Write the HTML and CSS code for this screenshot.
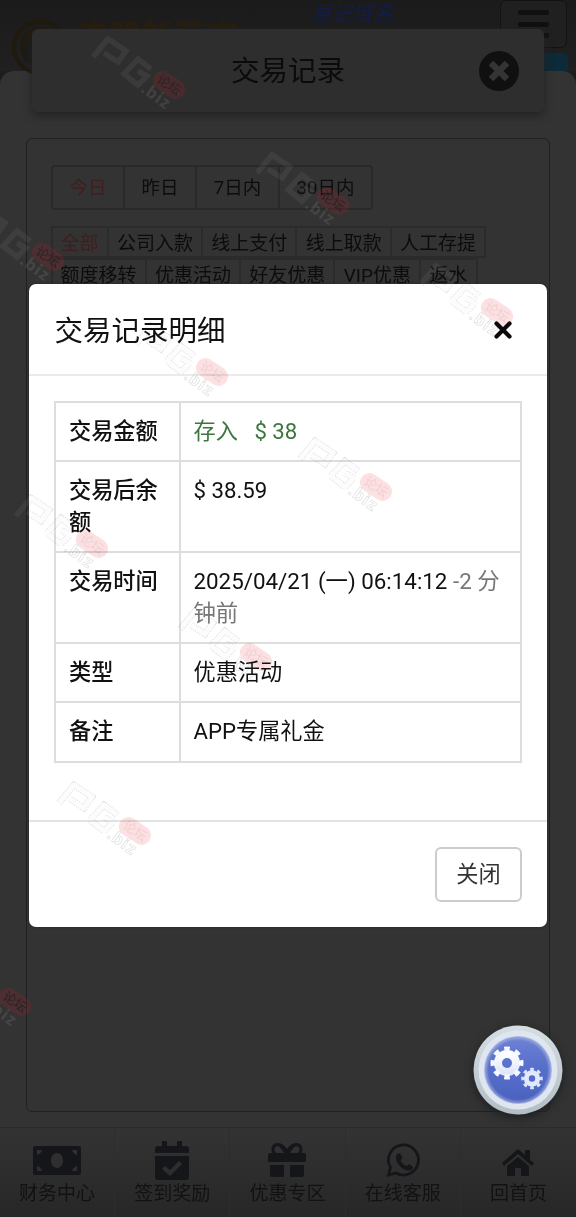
FILE: index.html
```html
<!DOCTYPE html>
<html lang="zh-CN">
<head>
<meta charset="utf-8">
<title>交易记录</title>
<link rel="stylesheet" href="styles.css">
</head>
<body>
<div class="page">
  <header class="top">
    <svg class="emblem" viewBox="0 0 60 60"><circle cx="30" cy="30" r="26" fill="none" stroke="#20190e" stroke-width="4"/><circle cx="30" cy="30" r="20" fill="#211a0f"/><path d="M15 45C12 34 17 24 25 16C22 28 26 32 28 36C34 29 33 21 36 15C47 27 46 38 42 47" fill="#1b1b1b"/></svg>
    <div class="brand">澳門新葡京</div>
    <div class="domain">易记域名</div>
    <div class="burger"><i></i><i></i><i></i></div>
    <div class="tag"></div>
  </header>
  <main class="content">
    <section class="panel">
      <div class="days"><span class="on">今日</span><span>昨日</span><span>7日内</span><span>30日内</span></div>
      <div class="kinds"><span class="on">全部</span><span>公司入款</span><span>线上支付</span><span>线上取款</span><span>人工存提</span></div>
      <div class="kinds"><span>额度移转</span><span>优惠活动</span><span>好友优惠</span><span>VIP优惠</span><span>返水</span></div>
    </section>
  </main>
  <nav class="nav">
    <div class="item"><svg viewBox="0 0 50 40"><path fill-rule="evenodd" d="M3 5H47Q49 5 49 7V32Q49 34 47 34H3Q1 34 1 32V7Q1 5 3 5ZM5 9V14Q9 13 10 9ZM40 9Q41 13 45 14V9ZM5 25V30H10Q9 26 5 25ZM45 25Q41 26 40 30H45ZM25 12C17 12 17 27 25 27S33 12 25 12Z"/></svg><span>财务中心</span></div>
    <div class="item"><svg viewBox="0 0 50 40"><path fill-rule="evenodd" d="M15 0H20V5H30V0H35V5H39Q42 5 42 8V12H8V8Q8 5 11 5H15ZM8 15H42V36Q42 39 39 39H11Q8 39 8 36ZM15 28L23 35L35 23L32 20L23 29L18 25Z"/></svg><span>签到奖励</span></div>
    <div class="item"><svg viewBox="0 0 50 40"><path fill-rule="evenodd" d="M10.500 12C8 7 10 2 16 2Q21 2 25 8Q29 2 34 2C40 2 42 7 39.500 12H42Q44 12 44 14V21H6V14Q6 12 8 12ZM15 12H22Q18 5 15.500 5Q12 6 12.500 9Q13 12 15 12ZM35 12Q37 12 37.500 9Q38 6 34.500 5Q32 5 28 12ZM8 24H22V36H10Q8 36 8 34ZM28 24H42V34Q42 36 40 36H28Z"/></svg><span>优惠专区</span></div>
    <div class="item"><svg viewBox="0 0 50 40"><path fill="none" stroke="#151619" stroke-width="2.800" d="M10.500 34L12.500 26.500A15 15 0 1 1 18 32Z"/><path d="M19 13L22 12L24.500 17L22.500 19.500Q25 24 28.500 25L31 23L35 26Q34 30 30 29.500C24 29 15 20 19 13Z"/></svg><span>在线客服</span></div>
    <div class="item"><svg viewBox="0 0 50 40"><path d="M9 22L25 8L32 14V9H37V19L41 22L39 25L25 13L11 25ZM14 25L25 16L36 25V35H28V27H22V35H14Z"/></svg><span>回首页</span></div>
  </nav>

  <div class="titlebar">
    <h1>交易记录</h1>
    <svg viewBox="0 0 40 40"><circle cx="20" cy="20" r="20" fill="#101010"/><path d="M12 12L28 28M28 12L12 28" stroke="#343434" stroke-width="6.5"/></svg>
  </div>

  <div class="modal">
    <div class="mhead"><h2>交易记录明细</h2><svg viewBox="0 0 20 20"><path d="M3.5 3.5L16.5 16.5M16.5 3.5L3.5 16.5" stroke="#0c0708" stroke-width="4.2" stroke-linecap="round"/></svg></div>
    <div class="mbody">
      <table>
        <tr class="r1"><th>交易金额</th><td class="green">存入 &nbsp; $ 38</td></tr>
        <tr class="r2"><th>交易后余额</th><td>$ 38.59</td></tr>
        <tr class="r3"><th>交易时间</th><td class="time">2025/04/21 (一) 06:14:12 <span class="muted">-2 分钟前</span></td></tr>
        <tr class="r1"><th>类型</th><td>优惠活动</td></tr>
        <tr class="r1"><th>备注</th><td>APP专属礼金</td></tr>
      </table>
    </div>
    <div class="mfoot"><button>关闭</button></div>
  </div>

  <svg class="marks" viewBox="0 0 576 1217">
    <defs>
      <g id="letters"><path d="M-76 -28L-61 -46L-43 -34L-51 -23L-65 -32"/><path d="M-18 -16L-31 -26L-45 -11L-31 0L-22 -9L-31 -14"/></g>
      <g id="pill"><rect x="-17.5" y="-9.5" width="35" height="19" rx="9.5" transform="rotate(34)"/></g>
      <g id="dark">
        <use href="#letters" fill="none" stroke="#aaa" stroke-opacity=".1" stroke-width="5.5"/>
        <use href="#pill" fill="#d02030" fill-opacity=".17"/>
        <text class="pt" transform="rotate(34)" x="-13" y="4.5" fill="#302526">论坛</text>
        <text class="biz" transform="translate(-29 6) rotate(36)" fill="#aaa" fill-opacity=".16">.biz</text>
      </g>
      <g id="light">
        <use href="#letters" fill="none" stroke="#dedee5" stroke-width="6.5" stroke-dasharray="1.5 1"/>
        <use href="#letters" fill="none" stroke="#fcfcfc" stroke-width="5"/>
        <use href="#pill" fill="#fde1e2"/>
        <text class="pt" transform="rotate(34)" x="-13" y="4.5" fill="#efd3d5">论坛</text>
        <text class="biz" transform="translate(-29 6) rotate(36)" fill="#fff" stroke="#dcdcdc" stroke-width=".6">.biz</text>
      </g>
      <clipPath id="sheet"><rect x="29" y="284" width="518" height="643"/></clipPath>
      <clipPath id="above"><rect width="576" height="284"/></clipPath>
      <clipPath id="side"><rect y="480" width="29" height="80"/></clipPath>
    </defs>
    <use href="#dark" x="169" y="85"/><use href="#dark" x="333" y="201"/><use href="#dark" x="48" y="257"/><use href="#dark" x="15" y="1002"/>
    <g clip-path="url(#above)"><path d="M421 284L436 266L454 278L449 284" fill="none" stroke="#aaa" stroke-opacity=".1" stroke-width="5.5"/></g>
    <g clip-path="url(#side)"><path d="M16 516L31 498L49 510L41 521L27 512" fill="none" stroke="#aaa" stroke-opacity=".1" stroke-width="5.5"/></g>
  </svg>
  <svg class="marks multiply" viewBox="0 0 576 1217">
    <g clip-path="url(#sheet)"><use href="#light" x="497" y="312"/><use href="#light" x="212" y="372"/><use href="#light" x="376" y="487"/><use href="#light" x="92" y="544"/><use href="#light" x="256" y="657"/><use href="#light" x="135" y="831"/></g>
  </svg>

  <div class="fab">
    <svg viewBox="0 0 90 90">
      <defs>
        <linearGradient id="rim" x2="0" y2="1"><stop stop-color="#d5dee2"/><stop offset="1" stop-color="#b2bdc6"/></linearGradient>
        <radialGradient id="blue"><stop stop-color="#5069cc"/><stop offset=".86" stop-color="#5168c4"/><stop offset="1" stop-color="#b4c0e6"/></radialGradient>
        <linearGradient id="gear" x2="0" y2="1"><stop stop-color="#fff"/><stop offset="1" stop-color="#e0e7fa"/></linearGradient>
        <linearGradient id="shine" x2="0" y2="1"><stop stop-color="#8fa0e4" stop-opacity=".5"/><stop offset=".5" stop-color="#6f84da" stop-opacity=".2"/><stop offset="1" stop-color="#304aaa" stop-opacity=".25"/></linearGradient>
      </defs>
      <circle cx="45" cy="45" r="44.5" fill="url(#rim)"/><circle cx="45" cy="45" r="39.5" fill="#e0e6ef"/><circle cx="45" cy="45" r="34" fill="url(#blue)"/><circle cx="45" cy="45" r="33" fill="url(#shine)"/>
      <g fill="none"><circle cx="34" cy="38" r="9" stroke="url(#gear)" stroke-width="8"/><circle cx="34" cy="38" r="14" stroke="#f6f8ff" stroke-width="5" pathLength="80" stroke-dasharray="5 5" stroke-dashoffset="2.5"/>
      <circle cx="59" cy="53.5" r="5.7" stroke="#e2e9fb" stroke-width="5"/><circle cx="59" cy="53.5" r="9" stroke="#dce4fa" stroke-width="3.5" pathLength="80" stroke-dasharray="5 5" stroke-dashoffset="2.5"/></g>
    </svg>
  </div>
</div>
</body>
</html>
```

FILE: styles.css
```css
* { box-sizing: border-box; }
body { margin: 0; background: #333; font-family: Roboto, "Noto Sans CJK SC", sans-serif; }
.page { position: relative; width: 576px; height: 1217px; overflow: hidden; display: flex; flex-direction: column; background: #1d1d1d; }

.top { position: relative; height: 71px; flex: none; background: linear-gradient(#1b1b1b, #202020); }
.emblem { position: absolute; left: 10px; top: 17px; width: 60px; height: 60px; }
.brand { position: absolute; left: 75px; top: 15px; font: bold 33px/40px "Noto Sans CJK SC", sans-serif; color: #281e0f; white-space: nowrap; }
.domain { position: absolute; left: 311px; top: 0; font-size: 20.5px; line-height: 28px; font-style: italic; font-weight: 400; color: #131d4a; white-space: nowrap; }
.burger { position: absolute; left: 500px; top: 0; width: 67px; height: 48px; padding: 9px 17px; border: 1px solid #131313; border-radius: 6px; background: #202020; display: flex; flex-direction: column; gap: 6.5px; }
.burger i { height: 5px; flex: none; border-radius: 2px; background: #101010; }
.tag { position: absolute; right: 8px; top: 53px; width: 60px; height: 18px; border-radius: 0 6px 0 0; background: #0d2a38; }

.content { flex: 1; padding: 67px 26px 14px; background: #333; border-radius: 14px 14px 0 0; }
.panel { height: 974px; border: 1.5px solid #202020; border-radius: 6px; padding: 26px 24px; }
.days { display: flex; width: 322px; height: 45px; margin-bottom: 16px; border: 2px solid #292929; border-radius: 4px; font-size: 18.5px; line-height: 43px; color: #0c0c0c; }
.days span { text-align: center; width: 72px; border-right: 2px solid #292929; }
.days span:nth-child(3) { width: 83px; }
.days span:last-child { flex: 1; border: 0; }
.kinds { display: flex; height: 32px; font-size: 19px; line-height: 32px; color: #0c0c0c; white-space: nowrap; }
.kinds span { border: 2px solid #2b2b2b; border-left-width: 0; padding: 0 8.2px; }
.kinds span:first-child { border-left-width: 2px; padding-left: 7.5px; }
.days .on, .kinds .on { color: #411e1e; }

.nav { flex: none; height: 90px; display: grid; grid-template-columns: repeat(5, 1fr); border-top: 1px solid #2b2b2b; background: linear-gradient(#333, #272727); }
.item { display: flex; flex-direction: column; align-items: center; padding-top: 13px; border-right: 1px solid #2d2d2d; font-size: 19px; line-height: 26px; color: #121212; }
.item:last-child { border-right: 0; }
.item svg { width: 50px; height: 40px; fill: #151619; }

.titlebar { position: absolute; left: 32px; top: 29px; width: 512px; height: 83px; border-radius: 6px; background: #2e2e2e; box-shadow: 0 4px 8px #232323; display: grid; grid-template-columns: 65px 1fr 65px; align-items: center; }
.titlebar h1 { grid-column: 2; margin: 0; padding-top: 2px; text-align: center; font-size: 28.5px; font-weight: 400; line-height: 40px; color: #0b0b0b; }
.titlebar svg { width: 40px; height: 40px; }

.modal { position: absolute; left: 29px; top: 284px; width: 518px; height: 643px; background: #fff; border-radius: 7px; color: #111; box-shadow: 0 0 3px #252525; display: flex; flex-direction: column; }
.mhead { height: 92px; padding: 1px 34px 0 25.5px; border-bottom: 2px solid #ebebeb; display: flex; justify-content: space-between; align-items: center; }
.mhead h2 { margin: 0; padding-top: 4px; font-size: 28.5px; font-weight: 400; line-height: 40px; }
.mhead svg { width: 20px; height: 20px; }
.mbody { flex: 1; padding: 25px 25px 0; }
table { width: 468px; table-layout: fixed; border-collapse: collapse; font-size: 22.2px; line-height: 32px; }
th, td { border: 2px solid #ddd; padding: 12px 13px 11px; vertical-align: top; text-align: left; }
th { width: 125px; font-weight: 500; }
td { padding-left: 12.5px; }
.time { font-size: 22.35px; }
.r1 { height: 59.2px; }
.r2, .r3 { height: 91px; }
.green { color: #3c763d; }
.muted { color: #777; }
.mfoot { height: 107px; border-top: 2px solid #e3e3e3; padding: 25px; display: flex; justify-content: flex-end; align-items: flex-start; }
.mfoot button { width: 87px; height: 55px; border: 2px solid #ccc; border-radius: 6px; background: #fff; color: #333; font: 22.2px/32px Roboto, "Noto Sans CJK SC", sans-serif; padding: 0 0 2px; }

.marks { position: absolute; left: 0; top: 0; width: 576px; height: 1217px; pointer-events: none; }
.pt { font: 500 13px "Noto Sans CJK SC", sans-serif; }
.biz { font: bold 16.5px "Open Sans", sans-serif; letter-spacing: 1px; }
.multiply { mix-blend-mode: multiply; }
.fab { position: absolute; left: 473px; top: 1025px; width: 90px; height: 90px; border-radius: 50%; box-shadow: 0 3px 8px #1c1f22; }
.fab svg { display: block; }
```
